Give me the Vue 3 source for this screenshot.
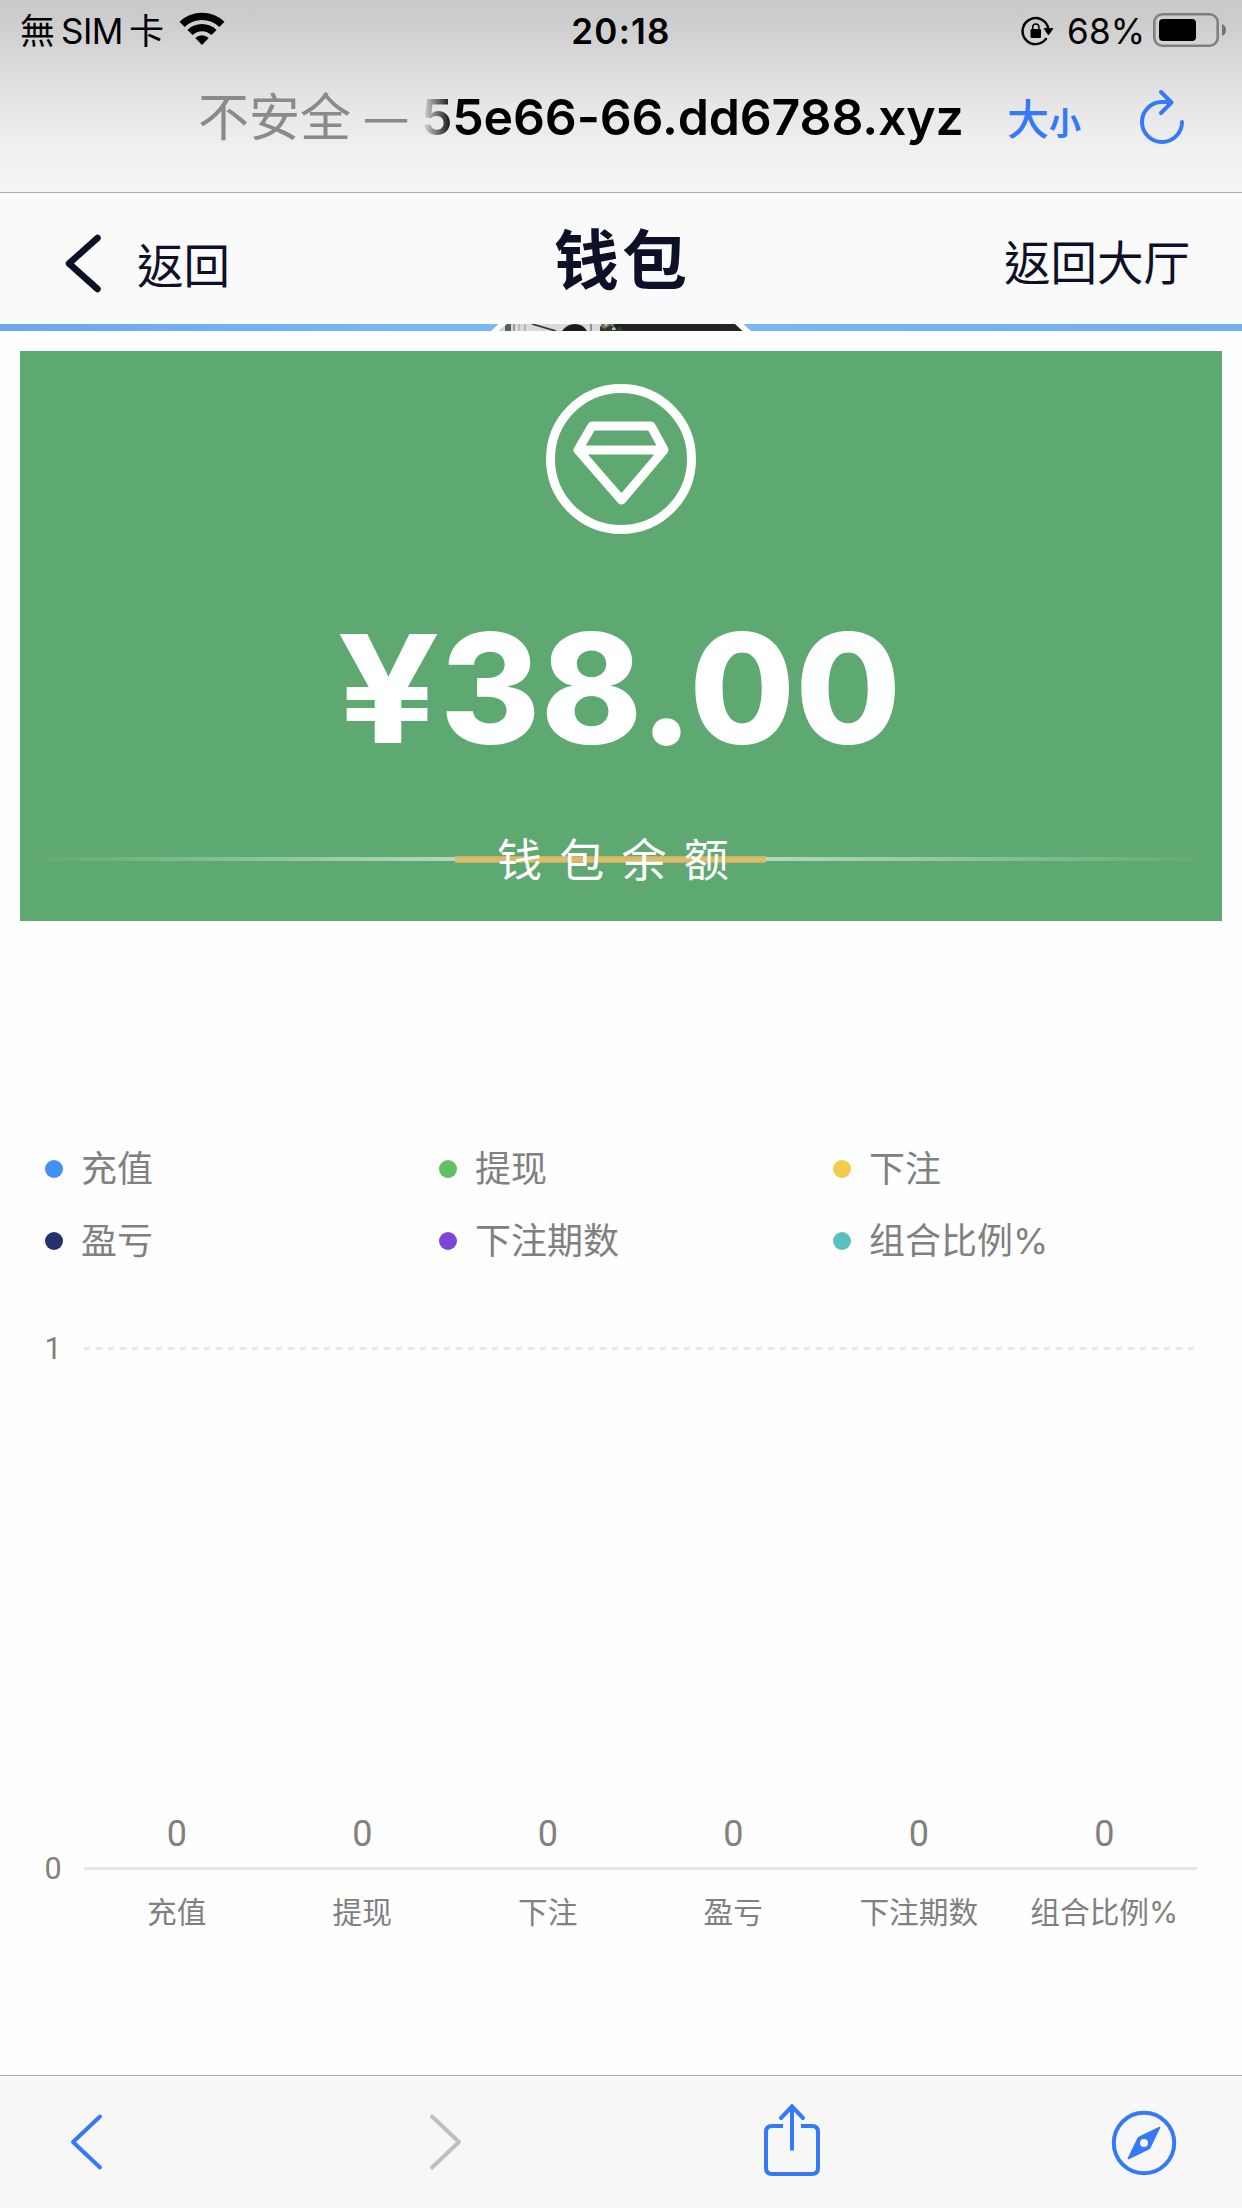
<script setup>
const series = [
  { name: '充值', color: '#448ef7', value: 0 },
  { name: '提现', color: '#62bf66', value: 0 },
  { name: '下注', color: '#f2cd49', value: 0 },
  { name: '盈亏', color: '#25306e', value: 0 },
  { name: '下注期数', color: '#7d46d8', value: 0 },
  { name: '组合比例%', color: '#59c0c0', value: 0 },
]
</script>

<template>
  <div class="screen">
    <header class="chrome">
      <div class="status">
        <div class="carrier"><span class="wu">無</span><span class="sim">SIM</span><span class="ka">卡</span>
          <svg class="wifi" width="46" height="34" viewBox="0 0 46 34">
            <path d="M0.5 9.7A32.500 32.500 0 0 1 45.500 9.700L40.300 15A25 25 0 0 0 5.700 15Z" />
            <path d="M8.400 17.900A21 21 0 0 1 37.600 17.900L32.400 23.100A13.500 13.500 0 0 0 13.600 23.100Z" />
            <path d="M16.300 26A9.800 9.800 0 0 1 29.700 26L23 33Z" />
          </svg>
        </div>
        <div class="clock">20:18</div>
        <div class="battery-side">
          <svg class="lock" width="33" height="31" viewBox="0 0 33 31">
            <path d="M25.500 22.200A13 13 0 1 1 27.300 12.500" fill="none" stroke="#000" stroke-width="2.400" />
            <path d="M23 12.500H32L27.500 19Z" stroke="#000" stroke-width=".8" stroke-linejoin="round" />
            <rect x="9.500" y="13" width="10.500" height="9" rx="1.200" />
            <path d="M11.700 13.500V11A3.100 3.100 0 0 1 17.900 11V13.500" fill="none" stroke="#000" stroke-width="1.500" />
          </svg>
          <span class="percent">68%</span>
          <svg class="battery" width="74" height="34" viewBox="0 0 74 34">
            <rect x="1.300" y="1.300" width="63.400" height="31.400" rx="8" fill="none" stroke="#808080" stroke-width="2.600" />
            <rect x="6" y="6" width="37" height="22" rx="4" />
            <path d="M69 11C74.300 12.500 74.300 21.500 69 23Z" fill="#757575" />
          </svg>
        </div>
      </div>
      <div class="address">
        <span class="insecure">不安全</span>
        <span class="dash">—</span>
        <span class="host">55e66-66.dd6788.xyz</span>
        <span class="text-size"><b>大</b><i>小</i></span>
        <svg class="reload" width="48" height="58" viewBox="0 0 48 58">
          <g fill="none" stroke="#3579f6" stroke-width="4" stroke-linecap="round" stroke-linejoin="round">
            <path d="M44 34A20 20 0 1 1 24 14H33" />
            <path d="M23 4L33.500 14.500L23 25" />
          </g>
        </svg>
      </div>
    </header>

    <nav class="page-nav">
      <svg class="nav-back" width="40" height="60" viewBox="0 0 40 60">
        <path d="M33.500 4L5 29.500L33.500 55" fill="none" stroke="#0d1026" stroke-width="6.500" stroke-linecap="round" stroke-linejoin="round" />
      </svg>
      <span class="back-label">返回</span>
      <h1>钱包</h1>
      <span class="lobby">返回大厅</span>
    </nav>

    <svg class="profile-strip" width="1242" height="7" viewBox="0 0 1242 7">
      <defs>
        <linearGradient id="sky"><stop offset="0" stop-color="#6ca8ee" /><stop offset=".35" stop-color="#77b9f5" /><stop offset=".6" stop-color="#76b7f5" /><stop offset="1" stop-color="#71aeee" /></linearGradient>
        <clipPath id="avatar"><path d="M507 0H735L742.500 7H499Z" /></clipPath>
      </defs>
      <rect width="1242" height="7" fill="url(#sky)" />
      <path d="M498.500 0H743.500L751 7H491Z" fill="#fff" />
      <g clip-path="url(#avatar)">
        <rect x="499" width="245" height="7" fill="#202524" />
        <rect x="499" width="107" height="7" fill="#dadbd9" />
        <rect x="499" width="6" height="7" fill="#cfd5d2" />
        <rect x="505" width="6" height="7" fill="#59635e" />
        <rect x="513" width="2" height="7" fill="#9a9f9b" />
        <rect x="518" width="2" height="7" fill="#bcbdb8" />
        <rect x="524" width="2" height="7" fill="#b7b8b3" />
        <path d="M532 0L556 7" stroke="#303637" stroke-width="1.800" />
        <path d="M562 7Q567 0 575 0Q583 0 587 7Z" fill="#1a1d1c" />
        <rect x="590" width="2" height="7" fill="#8f918b" />
        <rect x="601" width="13" height="7" fill="#6c7b60" />
        <path d="M600 2L605 5L610 1L616 5L622 2V7H600Z" fill="#2f3a2c" />
        <path d="M604 0H608L606 3ZM612 4L615 3L616 6H612Z" fill="#b8bda9" />
      </g>
    </svg>

    <section class="balance">
      <svg class="gem" width="150" height="150" viewBox="0 0 150 150" fill="none" stroke="#fff">
        <circle cx="75" cy="75" r="70.500" stroke-width="9" />
        <path d="M46 42H105L118 66L75.500 116L32 66ZM32 66H118" stroke-width="9" stroke-linejoin="round" />
      </svg>
      <div class="amount"><span class="yen">¥</span><span class="figure">38.00</span></div>
      <div class="caption"><span>钱包余额</span></div>
    </section>

    <section class="stats">
      <ul class="legend">
        <li v-for="s in series" :key="s.name">
          <i class="dot" :style="{ background: s.color }"></i>{{ s.name }}
        </li>
      </ul>
      <div class="chart">
        <div class="scale"><span>1</span><span>0</span></div>
        <div class="plot">
          <div class="grid-line"></div>
          <div class="values"><span v-for="s in series" :key="s.name">{{ s.value }}</span></div>
          <div class="base-line"></div>
          <div class="names"><span v-for="s in series" :key="s.name">{{ s.name }}</span></div>
        </div>
      </div>
    </section>

    <footer class="toolbar">
      <svg class="t-back" width="40" height="60" viewBox="0 0 40 60"><path d="M32 4.500L5 30L32 55.500" fill="none" stroke="#3579f6" stroke-width="4" stroke-linecap="round" stroke-linejoin="round" /></svg>
      <svg class="t-next" width="40" height="60" viewBox="0 0 40 60"><path d="M6 4.500L33 30L6 55.500" fill="none" stroke="#bfbfbf" stroke-width="4" stroke-linecap="round" stroke-linejoin="round" /></svg>
      <svg class="t-share" width="60" height="76" viewBox="0 0 60 76">
        <g fill="none" stroke="#3579f6" stroke-width="4">
          <path d="M21 24H10Q4 24 4 30V66Q4 72 10 72H50Q56 72 56 66V30Q56 24 50 24H39" />
          <path d="M30 47V4M19 16L30 4.500L41 16" stroke-linecap="round" stroke-linejoin="round" />
        </g>
      </svg>
      <svg class="t-compass" width="66" height="66" viewBox="0 0 66 66">
        <circle cx="33" cy="33" r="30.200" fill="none" stroke="#3579f6" stroke-width="4" />
        <path d="M48.300 16.700Q49.500 16.500 49.300 17.700L39.500 38Q39 39 38 39.500L18 49.300Q16.500 49.500 16.700 48L26.500 28Q27 27 28 26.500ZM33 29A4 4 0 1 0 33 37A4 4 0 1 0 33 29Z" fill="#3579f6" fill-rule="evenodd" />
      </svg>
    </footer>
  </div>
</template>

<style>
body { margin: 0; background: #fefefe; }
</style>

<style scoped>
.screen {
  width: 1242px;
  height: 2208px;
  display: flex;
  flex-direction: column;
  overflow: hidden;
  background: #fefefe;
  font-family: Inter, "Noto Sans CJK SC", sans-serif;
  color: #000;
}
.screen svg { display: block; flex: none; }
span { white-space: nowrap; }

.chrome {
  box-sizing: border-box;
  height: 193px;
  border-bottom: 1px solid #ababab;
  background: linear-gradient(#c9c9c9, #cdcdcd 20px, #d9d9d9 62px, #e6e6e6 105px, #f0f0f0 150px, #f4f4f4 192px);
}
.status {
  display: grid;
  grid-template-columns: 1fr 200px 1fr;
  height: 62px;
  font-size: 35px;
  line-height: 62px;
}
.carrier { display: flex; padding-left: 20px; font-family: Inter, "Noto Sans CJK TC", sans-serif; }
.wu { width: 41px; }
.sim { width: 68px; letter-spacing: -.5px; }
.ka { width: 50px; }
.wifi { margin-top: 12px; }
.clock { text-align: center; font-weight: 600; letter-spacing: 1.200px; }
.battery-side { display: flex; justify-content: flex-end; padding-right: 15px; }
.lock { margin-top: 16px; }
.percent { width: 77px; margin-left: 13px; letter-spacing: .2px; }
.battery { margin: 13px 0 0 9px; }

.address { display: flex; height: 110px; padding-left: 198px; line-height: 110px; font-size: 50px; }
.insecure { width: 167px; font-size: 51px; line-height: 112px; color: #8a8a8a; }
.dash { width: 56px; font-size: 42px; line-height: 114px; color: #8a8a8a; }
.host {
  width: 586px;
  font-weight: 600;
  letter-spacing: -.15px;
  -webkit-mask-image: linear-gradient(90deg, transparent, #000 32px);
  mask-image: linear-gradient(90deg, transparent, #000 32px);
}
.text-size { width: 131px; color: #3579f6; font-weight: 500; }
.text-size b { font-size: 42px; font-weight: 500; }
.text-size i { font-size: 32px; font-style: normal; font-weight: 700; }
.reload { margin-top: 26px; }

.page-nav { display: flex; height: 131px; background: #fafafa; color: #0d1026; font-family: "Noto Sans CJK TC", sans-serif; font-size: 46.500px; }
.nav-back { margin: 41px 0 0 64px; }
.back-label { width: 417px; margin-left: 33px; line-height: 139px; }
h1 { width: 450px; margin: 0; font: 700 65px/126px "Noto Sans CJK SC", sans-serif; letter-spacing: 3px; }
.lobby { line-height: 133px; }

.balance {
  display: flex;
  flex-direction: column;
  align-items: center;
  height: 570px;
  margin: 20px 20px 0;
  background: #5ea871;
  color: #fff;
}
.gem { margin-top: 33px; }
.amount { display: flex; align-self: stretch; height: 200px; margin-top: 55px; padding-left: 317px; font-size: 153px; font-weight: 800; line-height: 200px; }
.yen { width: 103px; font-size: 150px; font-weight: 700; transform: scaleX(1.200); transform-origin: left; }
.figure { letter-spacing: .3px; }
.caption {
  align-self: stretch;
  height: 60px;
  margin-top: 42px;
  text-align: center;
  font: 45px/54px "Noto Sans CJK SC", sans-serif;
  letter-spacing: 17.300px;
  background:
    linear-gradient(#b5b26a, #dfbb69 2px, #dfbb69 5px, #b5b26a) 435px 25px / 311px 7px no-repeat,
    linear-gradient(90deg, #fff0, #ffffff8c 436px, #ffffff8c 746px, #fff0) 0 26px / 100% 4px no-repeat;
}
.caption span { display: inline-block; margin-left: 1px; }

.stats { height: 1154px; color: #808080; }
.legend { display: grid; grid-template: 72px 72px / 394px 394px 394px; margin: 0; padding: 212px 0 0 45px; list-style: none; font-size: 36px; line-height: 68px; }
.legend li { display: flex; align-items: center; height: 72px; white-space: nowrap; }
.dot { width: 18px; height: 18px; margin-right: 18px; border-radius: 50%; }
.chart { display: flex; margin-top: 50px; font-family: Roboto, "Liberation Sans", sans-serif; }
.scale { display: flex; flex-direction: column; justify-content: space-between; align-items: center; width: 18px; height: 564px; margin: 0 22px 0 44px; font-size: 30.500px; line-height: 44px; }
.plot { width: 1113px; padding-top: 20px; }
.grid-line { height: 3px; width: 1112px; background: repeating-linear-gradient(90deg, #e8e8e8 0 6px, transparent 6px 12px); }
.values, .names { display: grid; grid-template-columns: repeat(6, 1fr); text-align: center; }
.values { padding-top: 459px; font-size: 36px; line-height: 50px; }
.base-line { height: 3px; margin-top: 8px; background: #e6e6e6; }
.names { font: 29.700px/40px Inter, "Noto Sans CJK SC", sans-serif; padding-top: 22px; }

.toolbar { box-sizing: border-box; display: flex; height: 133px; border-top: 1px solid #ababab; background: #f7f7f7; }
.t-back { margin: 36px 0 0 68px; }
.t-next { margin: 36px 0 0 318px; }
.t-share { margin: 26px 0 0 296px; }
.t-compass { margin: 34px 0 0 289px; }
</style>
